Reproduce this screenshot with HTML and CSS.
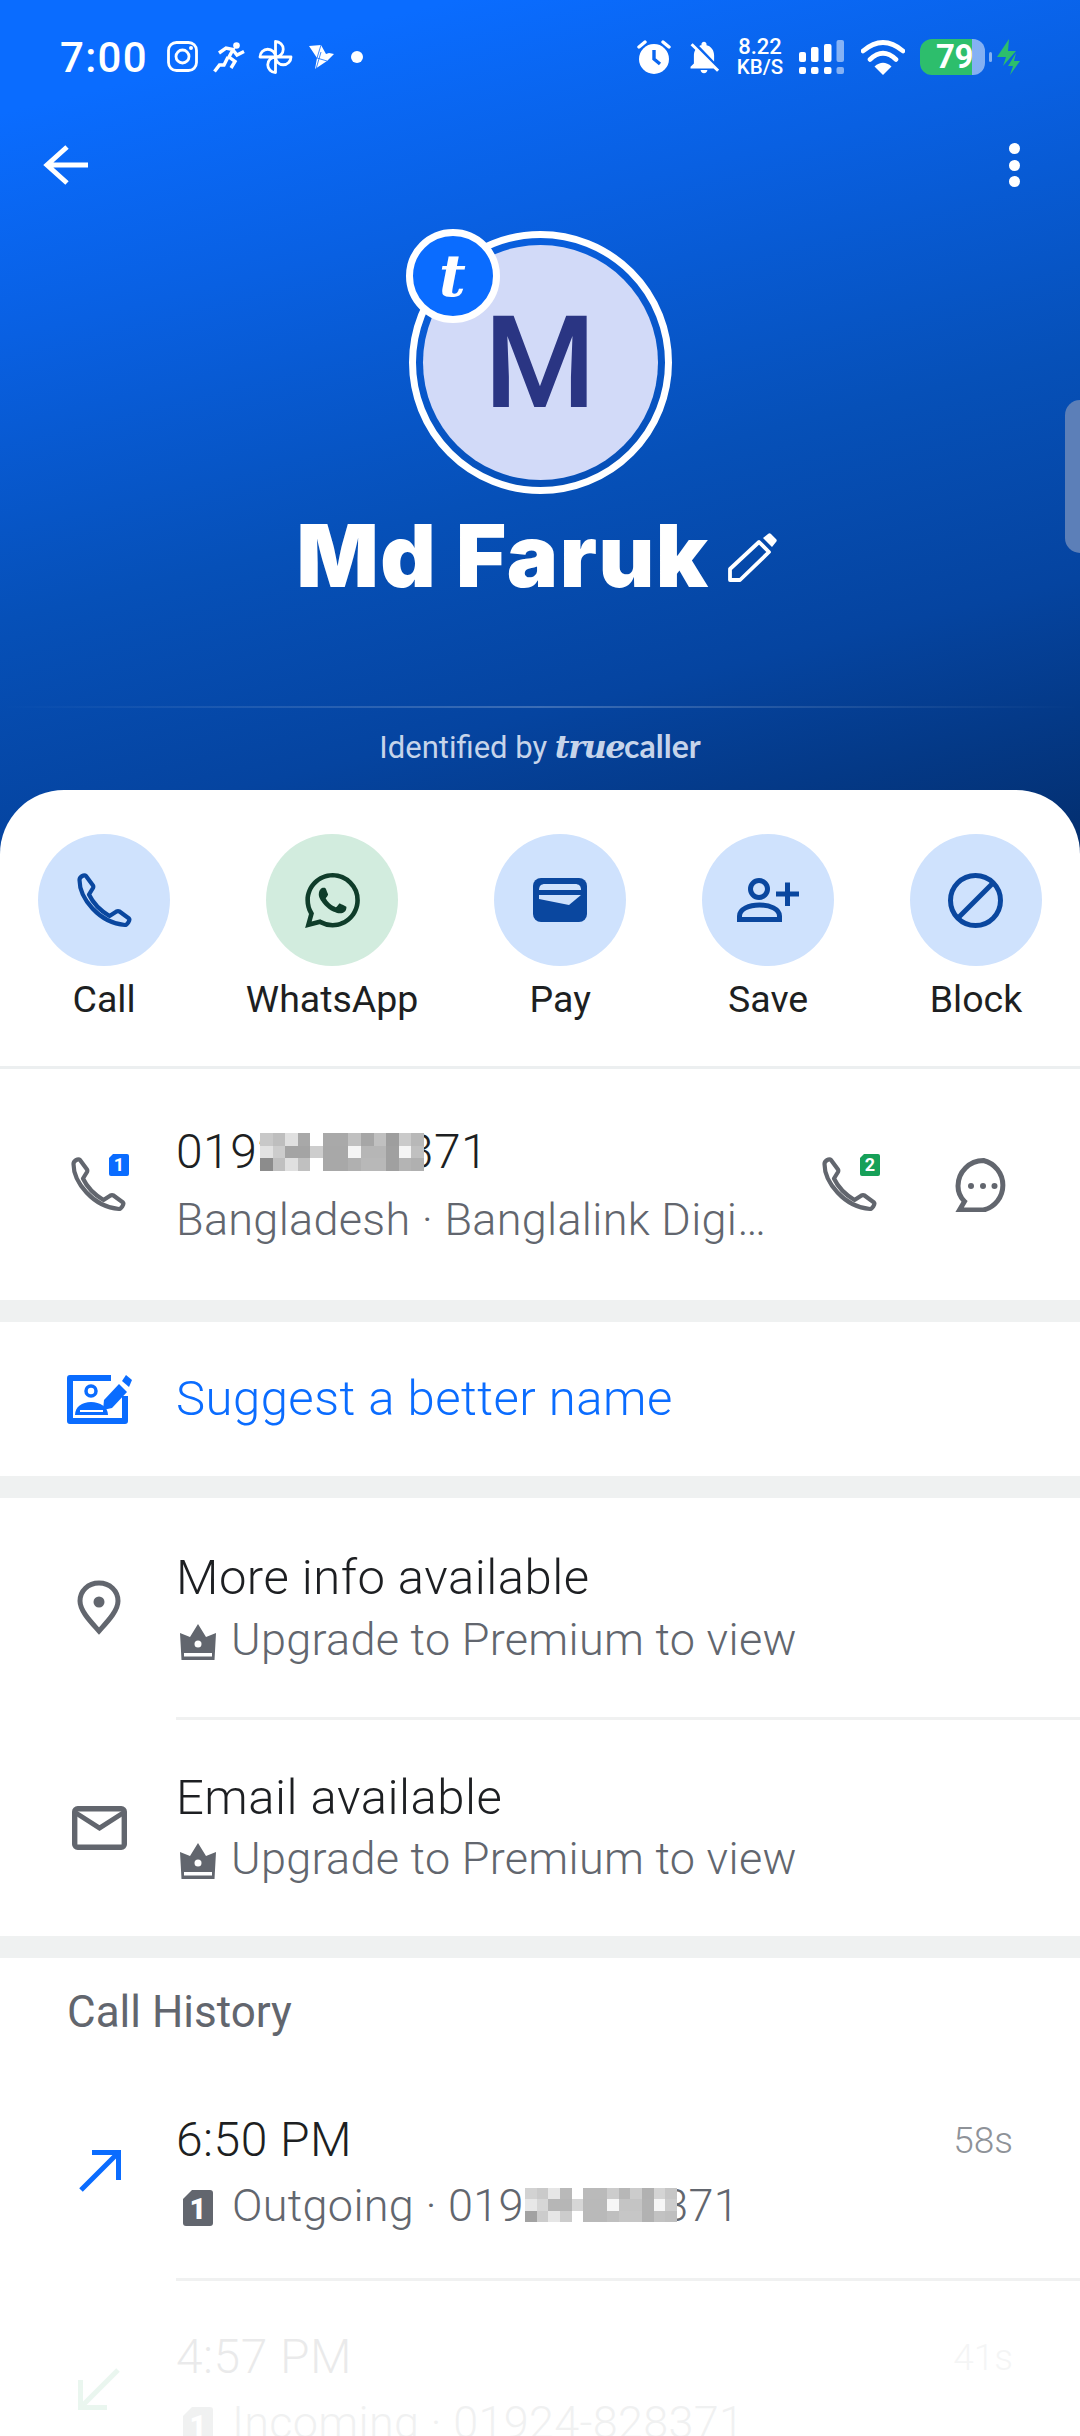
FILE: index.html
```html
<!DOCTYPE html>
<html lang="en">
<head>
<meta charset="utf-8">
<title>Md Faruk</title>
<link rel="stylesheet" href="styles.css">
</head>
<body>
<svg class="defs" aria-hidden="true">
  <symbol id="phone" viewBox="0 0 55 55"><path d="M2.500 7C2.500 4 7 1 9 3L16 12.500C16.500 13.500 16.500 14 16 15L12 21.500C16 30 24 38 32.500 43L39.500 38.500C40.500 38 41.500 38 42.500 38.500L52 45.500C53.500 47 50 52 48 52C22 50 2.500 25 2.500 7Z" fill="none" stroke="currentColor" stroke-width="4.200" stroke-linejoin="round"/></symbol>
  <symbol id="crown" viewBox="0 0 36 36"><path d="M18 0L26 13L36 9L34.500 36H1.500L0 9L10 13Z" fill="currentColor"/><circle cx="18" cy="20" r="3.500" fill="#fff"/><rect x="4" y="29" width="28" height="3.500" fill="#fff"/></symbol>
  <symbol id="mosaic" viewBox="0 0 13 3" preserveAspectRatio="none">
    <g shape-rendering="crispEdges">
      <rect x="0" y="0" width="1" height="1" fill="#c8c8c8"/><rect x="1" y="0" width="1" height="1" fill="#bebebe"/><rect x="2" y="0" width="1" height="1" fill="#e0e0e0"/><rect x="3" y="0" width="1" height="1" fill="#a8a8a8"/><rect x="4" y="0" width="1" height="1" fill="#fff"/><rect x="5" y="0" width="2" height="1" fill="#a9a9a9"/><rect x="7" y="0" width="1" height="1" fill="#c0c0c0"/><rect x="8" y="0" width="1" height="1" fill="#a6a6a6"/><rect x="9" y="0" width="1" height="1" fill="#c0c0c0"/><rect x="10" y="0" width="1" height="1" fill="#9e9e9e"/><rect x="11" y="0" width="1" height="1" fill="#cacaca"/><rect x="12" y="0" width="1" height="1" fill="#b8b8b8"/>
      <rect x="0" y="1" width="1" height="1" fill="#e2e2e2"/><rect x="1" y="1" width="1" height="1" fill="#cccccc"/><rect x="2" y="1" width="2" height="1" fill="#a4a4a4"/><rect x="4" y="1" width="1" height="1" fill="#cdcdcd"/><rect x="5" y="1" width="2" height="1" fill="#a8a8a8"/><rect x="7" y="1" width="1" height="1" fill="#f5f5f5"/><rect x="8" y="1" width="2" height="1" fill="#b6b6b6"/><rect x="10" y="1" width="1" height="1" fill="#a0a0a0"/><rect x="11" y="1" width="1" height="1" fill="#f5f5f5"/><rect x="12" y="1" width="1" height="1" fill="#c0c0c0"/>
      <rect x="0" y="2" width="1" height="1" fill="#8c8c8c"/><rect x="1" y="2" width="1" height="1" fill="#c0c0c0"/><rect x="2" y="2" width="1" height="1" fill="#e0e0e0"/><rect x="3" y="2" width="1" height="1" fill="#c0c0c0"/><rect x="4" y="2" width="1" height="1" fill="#fff"/><rect x="5" y="2" width="2" height="1" fill="#a8a8a8"/><rect x="7" y="2" width="1" height="1" fill="#b0b0b0"/><rect x="8" y="2" width="2" height="1" fill="#b8b8b8"/><rect x="10" y="2" width="1" height="1" fill="#a0a0a0"/><rect x="11" y="2" width="1" height="1" fill="#b4b4b4"/><rect x="12" y="2" width="1" height="1" fill="#b0b0b0"/>
    </g>
  </symbol>
</svg>

<div class="phone">
  <div class="hero">
    <div class="status">
      <span class="time">7:00</span>
      <svg class="ic-insta" viewBox="0 0 31 31"><rect x="1.500" y="1.500" width="28" height="28" rx="8" fill="none" stroke="#fff" stroke-width="2.800"/><circle cx="15.500" cy="15.500" r="6.500" fill="none" stroke="#fff" stroke-width="2.800"/><circle cx="24" cy="7" r="2" fill="#fff"/></svg>
      <svg class="ic-run" viewBox="0 0 32 31"><circle cx="23.500" cy="3.500" r="3.300" fill="#fff"/><path d="M6 11L13 6L20 7.500L16 15L22 19.500L18 26M20 8L24 13L31 9.500M15 15L11 23H6.500L1.500 29.500" fill="none" stroke="#fff" stroke-width="3.400"/></svg>
      <svg class="ic-wheel" viewBox="0 0 35 34"><g fill="none" stroke="#fff" stroke-width="2.800" stroke-linejoin="round"><path d="M17.500 17V1.500A7.700 7.700 0 0 1 17.500 17Z"/><path d="M17.500 17H33A7.700 7.700 0 0 1 17.500 17Z"/><path d="M17.500 17V32.500A7.700 7.700 0 0 1 17.500 17Z"/><path d="M17.500 17H2A7.700 7.700 0 0 1 17.500 17Z"/></g></svg>
      <svg class="ic-bird" viewBox="0 0 26 24"><path d="M0 1L12 0L17 9L20 8L25 9L18 16L6 24L8 13Z" fill="#fff"/><path d="M8 13L12 0M8 13L18 16M12 7L7 24" stroke="#0a6cff" stroke-width=".8"/></svg>
      <i class="ic-dot"></i>
      <span class="status-gap"></span>
      <svg class="ic-alarm" viewBox="0 0 34 34"><circle cx="17" cy="19" r="15" fill="#fff"/><path d="M17 10V19L23 24" fill="none" stroke="#0a66f0" stroke-width="3.400"/><path d="M2 7L8 2M32 7L26 2" stroke="#fff" stroke-width="3.400" stroke-linecap="round"/></svg>
      <svg class="ic-bell" viewBox="2.500 1.500 19 21.500" preserveAspectRatio="none"><path fill="#fff" d="M20 18.690L7.840 6.140 5.270 3.490 4 4.760l2.800 2.800v.01c-.52.99-.8 2.160-.8 3.420v5l-2 2v1h13.730l2 2L21 19.720l-1-1.030zM12 22c1.110 0 2-.89 2-2h-4c0 1.110.89 2 2 2zm6-7.320V11c0-3.080-1.640-5.640-4.500-6.320V4c0-.83-.67-1.500-1.500-1.500s-1.500.67-1.500 1.500v.68c-.15.03-.29.08-.42.12-.1.03-.2.07-.3.11h-.01c-.2.08-.4.170-.59.270-.01 0-.01.01-.02.01L18 14.680z"/></svg>
      <span class="speed"><span>8.22</span><span class="speed-unit">KB/S</span></span>
      <svg class="ic-signal" viewBox="0 0 46 35"><g fill="#fff"><rect x="0" y="12" width="7" height="10" rx="2"/><rect x="12" y="7" width="7.500" height="15" rx="2"/><rect x="25" y="4" width="7.500" height="18" rx="2"/><rect x="0" y="27" width="7" height="7" rx="2"/><rect x="12" y="27" width="7.500" height="7" rx="2"/><rect x="25" y="27" width="7.500" height="7" rx="2"/></g><g fill="#fff" opacity=".5"><rect x="37.500" y="0" width="7.500" height="22" rx="2"/><rect x="37.500" y="27" width="7.500" height="7" rx="2"/></g></svg>
      <svg class="ic-wifi" viewBox="0 0 44 36"><path d="M2 12Q22-5 42 12M9 20.500Q22 8 35 20.500" fill="none" stroke="#fff" stroke-width="4.600" stroke-linecap="round"/><path d="M22 36L13.500 27.500Q22 20 30.500 27.500Z" fill="#fff"/></svg>
      <span class="battery">79</span>
      <i class="battery-nub"></i>
      <svg class="ic-bolt" viewBox="0 0 23 36"><path d="M12 0L0 18H9L6 27L19 12H11Z M19 14L11 27H16L13 36L23 22H17Z" fill="#2dbe6c"/></svg>
    </div>
    <div class="toolbar">
      <svg class="ic-back" viewBox="0 0 46 42"><path d="M45 21H5M24 3L4 21L24 39" fill="none" stroke="#fff" stroke-width="5"/></svg>
      <span class="dots"><i></i><i></i><i></i></span>
    </div>
    <div class="avatar">
      <div class="avatar-disk">M</div>
      <div class="avatar-badge">t</div>
    </div>
    <div class="name-row">
      <span class="name">Md Faruk</span>
      <svg class="ic-pencil" viewBox="0 0 50 50"><path d="M3 47V36L32 9L42 19L13 47Z" fill="none" stroke="#fff" stroke-width="3.800" stroke-linejoin="round"/><path d="M36 5L41 1C42 0 43 0 44 1L49 6C50 7 50 8 49 9L45 14Z" fill="#fff"/></svg>
    </div>
    <div class="hero-rule"></div>
    <div class="identified">Identified by <span class="tc"><span class="tc-true">true</span><span class="tc-caller">caller</span></span></div>
  </div>

  <div class="sheet">
    <div class="actions">
      <div class="action">
        <div class="action-disc"><svg class="ai-phone"><use href="#phone"/></svg></div>
        <span class="action-label">Call</span>
      </div>
      <div class="action">
        <div class="action-disc disc-green"><svg class="ai-wa" viewBox="0 0 24 24"><path fill="currentColor" d="M17.472 14.382c-.297-.149-1.758-.867-2.03-.967-.273-.099-.471-.148-.67.15-.197.297-.767.966-.94 1.164-.173.199-.347.223-.644.075-.297-.15-1.255-.463-2.39-1.475-.883-.788-1.48-1.761-1.653-2.059-.173-.297-.018-.458.13-.606.134-.133.298-.347.446-.52.149-.174.198-.298.298-.497.099-.198.05-.371-.025-.52-.075-.149-.669-1.612-.916-2.207-.242-.579-.487-.5-.669-.51-.173-.008-.371-.01-.57-.01-.198 0-.52.074-.792.372-.272.297-1.04 1.016-1.04 2.479 0 1.462 1.065 2.875 1.213 3.074.149.198 2.096 3.2 5.077 4.487.709.306 1.262.489 1.694.625.712.227 1.36.195 1.871.118.571-.085 1.758-.719 2.006-1.413.248-.694.248-1.289.173-1.413-.074-.124-.272-.198-.57-.347m-5.421 7.403h-.004a9.87 9.87 0 01-5.031-1.378l-.361-.214-3.741.982.998-3.648-.235-.374a9.86 9.86 0 01-1.51-5.26c.001-5.45 4.436-9.884 9.888-9.884 2.64 0 5.122 1.03 6.988 2.898a9.825 9.825 0 012.893 6.994c-.003 5.45-4.437 9.884-9.885 9.884m8.413-18.297A11.815 11.815 0 0012.05 0C5.495 0 .16 5.335.157 11.892c0 2.096.547 4.142 1.588 5.945L.057 24l6.305-1.654a11.882 11.882 0 005.683 1.448h.005c6.554 0 11.89-5.335 11.893-11.893a11.821 11.821 0 00-3.48-8.413z"/></svg></div>
        <span class="action-label">WhatsApp</span>
      </div>
      <div class="action">
        <div class="action-disc"><svg class="ai-pay" viewBox="0 0 54 44"><rect width="54" height="44" rx="8" fill="currentColor"/><path d="M6 12C6 8 8 6 12 6H42C46 6 48 8 48 12Z" fill="#cfe2fd"/><path d="M6 17H48L36 27L6 21Z" fill="#cfe2fd"/></svg></div>
        <span class="action-label">Pay</span>
      </div>
      <div class="action">
        <div class="action-disc"><svg class="ai-save" viewBox="0 0 62 44"><g fill="none" stroke="currentColor" stroke-width="5"><circle cx="22" cy="11" r="8.500"/><path d="M2.500 41.500V38C2.500 31 12 27 22.500 27S42.500 31 42.500 38V41.500Z"/><path d="M39 16H62M50.500 4.500V28"/></g></svg></div>
        <span class="action-label">Save</span>
      </div>
      <div class="action">
        <div class="action-disc"><svg class="ai-block" viewBox="0 0 55 55"><circle cx="27.500" cy="27.500" r="25" fill="none" stroke="currentColor" stroke-width="5"/><path d="M45 10L10 45" stroke="currentColor" stroke-width="5"/></svg></div>
        <span class="action-label">Block</span>
      </div>
    </div>

    <div class="row row-number">
      <div class="row-icon">
        <div class="phone-sim">
          <svg class="i-phone"><use href="#phone"/></svg>
          <svg class="sim-tag" viewBox="0 0 20 22"><path d="M4 0H18A2 2 0 0 1 20 2V20A2 2 0 0 1 18 22H2A2 2 0 0 1 0 20V4Z" fill="#0a6cff"/><text x="10" y="17" class="sim-num">1</text></svg>
        </div>
      </div>
      <div class="row-text">
        <div class="primary digits masked">01924-828371<svg class="mosaic mosaic-a"><use href="#mosaic"/></svg></div>
        <div class="secondary gap8">Bangladesh · Banglalink Digi…</div>
      </div>
      <div class="row-tools">
        <div class="phone-sim">
          <svg class="i-phone"><use href="#phone"/></svg>
          <svg class="sim-tag" viewBox="0 0 20 22"><path d="M4 0H18A2 2 0 0 1 20 2V20A2 2 0 0 1 18 22H2A2 2 0 0 1 0 20V4Z" fill="#16a058"/><text x="10" y="17" class="sim-num">2</text></svg>
        </div>
        <svg class="i-msg" viewBox="0 0 56 54"><path d="M28.500 2.500A25.500 25.500 0 0 1 28.500 52H4.500L9.500 43.500C5 39 3 34 3 28A25.500 25.500 0 0 1 28.500 2.500Z" fill="none" stroke="#62666e" stroke-width="5"/><circle cx="16" cy="28" r="3" fill="#62666e"/><circle cx="28" cy="28" r="3" fill="#62666e"/><circle cx="39.500" cy="28" r="3" fill="#62666e"/></svg>
      </div>
    </div>
    <div class="band"></div>

    <div class="row row-suggest">
      <div class="row-icon">
        <svg class="i-suggest" viewBox="0 0 65 50"><path d="M44 4H3V47H58V22" fill="none" stroke="#0a6cff" stroke-width="6" stroke-linejoin="round"/><circle cx="24" cy="17" r="5" fill="none" stroke="#0a6cff" stroke-width="3.500"/><path d="M8 41C8 33 15 28 24 28S41 33 41 41Z" fill="#0a6cff"/><path d="M13 37H36" stroke="#fff" stroke-width="2"/><path d="M36 36L37 26L52 10L60 18L45 34Z" fill="#0a6cff"/><path d="M55 7L59 1L65 6L62 13Z" fill="#0a6cff"/></svg>
      </div>
      <div class="row-text"><div class="primary link">Suggest a better name</div></div>
    </div>
    <div class="band"></div>

    <div class="row row-info">
      <div class="row-icon">
        <svg class="i-pin" viewBox="0 0 44 55"><path d="M22 3C11 3 3 11 3 21C3 31 14 42 22 51C30 42 41 31 41 21C41 11 33 3 22 3Z" fill="none" stroke="#62666e" stroke-width="5"/><circle cx="22" cy="22" r="5.500" fill="#62666e"/></svg>
      </div>
      <div class="row-text">
        <div class="primary">More info available</div>
        <div class="secondary with-icon"><svg class="i-crown"><use href="#crown"/></svg>Upgrade to Premium to view</div>
      </div>
    </div>
    <div class="rule"></div>
    <div class="row row-email">
      <div class="row-icon">
        <svg class="i-mail" viewBox="0 0 55 44"><rect x="2.700" y="2.700" width="49.600" height="38.600" rx="3" fill="none" stroke="#62666e" stroke-width="5.400"/><path d="M4 7L27.500 22L51 7" fill="none" stroke="#62666e" stroke-width="5"/></svg>
      </div>
      <div class="row-text">
        <div class="primary">Email available</div>
        <div class="secondary with-icon"><svg class="i-crown"><use href="#crown"/></svg>Upgrade to Premium to view</div>
      </div>
    </div>
    <div class="band"></div>

    <div class="history-title">Call History</div>
    <div class="row row-call">
      <div class="row-icon">
        <svg class="i-arrow" viewBox="0 0 43 43"><path d="M14 2.500H40.500V30M40 3L3 40" fill="none" stroke="#0a6cff" stroke-width="5"/></svg>
      </div>
      <div class="row-text">
        <div class="primary digits">6:50 PM</div>
        <div class="secondary gap5 with-icon masked"><svg class="i-sim" viewBox="0 0 30 36"><path d="M9 0H27A3 3 0 0 1 30 3V33A3 3 0 0 1 27 36H3A3 3 0 0 1 0 33V9Z" fill="#62666e"/><text x="15" y="29" class="sim-num-lg">1</text></svg>Outgoing · 01924-828371<svg class="mosaic mosaic-b"><use href="#mosaic"/></svg></div>
      </div>
      <span class="duration">58s</span>
    </div>
    <div class="rule"></div>
    <div class="row row-call row-faded">
      <div class="row-icon">
        <svg class="i-arrow" viewBox="0 0 43 43"><path d="M29 40.500H2.500V13M3 40L40 3" fill="none" stroke="#16a058" stroke-width="5"/></svg>
      </div>
      <div class="row-text">
        <div class="primary digits">4:57 PM</div>
        <div class="secondary gap5 with-icon"><svg class="i-sim" viewBox="0 0 30 36"><path d="M9 0H27A3 3 0 0 1 30 3V33A3 3 0 0 1 27 36H3A3 3 0 0 1 0 33V9Z" fill="#62666e"/><text x="15" y="29" class="sim-num-lg">1</text></svg>Incoming · 01924-828371</div>
      </div>
      <span class="duration">41s</span>
    </div>
  </div>

  <div class="edge-handle"></div>
</div>
</body>
</html>
```

FILE: styles.css
```css
* { box-sizing: border-box; }
html, body { margin: 0; padding: 0; background: #fff; }
body { font-family: Roboto, "Noto Sans", sans-serif; }
i { display: block; }
svg { display: block; flex: none; }
.defs { position: absolute; width: 0; height: 0; overflow: hidden; }

.phone { position: relative; width: 1080px; height: 2436px; overflow: hidden; }

/* Hero */
.hero {
  height: 860px;
  background: linear-gradient(166deg, #0a6cff 0%, #0a6cff 10%, #0960e2 30%, #0650b8 55%, #0544a0 75%, #032f70 98%);
  color: #fff;
}
.status { display: flex; align-items: center; height: 114px; padding-left: 60px; padding-right: 60px; }
.time { font-size: 42px; font-weight: 500; letter-spacing: 1.300px; width: 107px; }
.ic-insta { width: 31px; height: 31px; margin-top: -1px; }
.ic-run { width: 32px; height: 31px; margin-left: 15px; }
.ic-wheel { width: 35px; height: 34px; margin-left: 13px; }
.ic-bird { width: 26px; height: 24px; margin-left: 16px; }
.ic-dot { width: 12px; height: 12px; border-radius: 50%; background: #fff; margin-left: 16px; }
.status-gap { flex: 1; }
.ic-alarm { width: 34px; height: 34px; }
.ic-bell { width: 32px; height: 35px; margin-left: 17px; }
.speed { display: flex; flex-direction: column; align-items: center; width: 48px; margin-left: 16px; font-size: 22px; font-weight: 500; line-height: 20px; }
.speed-unit { font-size: 20.500px; }
.ic-signal { width: 46px; height: 35px; margin-left: 15px; }
.ic-wifi { width: 44px; height: 36px; margin-left: 16px; }
.battery {
  width: 65px; height: 36px; margin-left: 15px; padding-left: 16px; border-radius: 12px;
  background: linear-gradient(90deg, #2dbe6c 80%, rgba(255, 255, 255, .5) 80%);
  font-size: 33px; font-weight: 700; line-height: 36px; letter-spacing: -.5px;
}
.battery-nub { width: 3px; height: 10px; margin-left: 4px; border-radius: 2px; background: rgba(255, 255, 255, .5); }
.ic-bolt { width: 23px; height: 36px; margin-left: 5px; }

.toolbar { display: flex; justify-content: space-between; align-items: center; height: 102px; padding: 0 60px 0 43px; }
.ic-back { width: 46px; height: 42px; }
.dots { display: flex; flex-direction: column; gap: 5.500px; }
.dots i { width: 11px; height: 11px; border-radius: 50%; background: #fff; }

.avatar { position: relative; width: 263px; height: 263px; margin: 15px auto 0; padding: 7px; border: 7px solid #fff; border-radius: 50%; }
.avatar-disk {
  width: 100%; height: 100%; border-radius: 50%; background: #d2daf8; color: #2a3583;
  display: flex; align-items: center; justify-content: center;
  font-size: 128px; font-weight: 500; line-height: 1;
}
.avatar-badge {
  position: absolute; left: -10px; top: -9px; width: 94px; height: 94px;
  border: 7px solid #fff; border-radius: 50%; background: #0a6cff; color: #fff;
  display: flex; align-items: center; justify-content: center;
  font-family: "DejaVu Serif", serif; font-style: italic; font-weight: 700; font-size: 58px; line-height: 1;
}

.name-row { display: flex; align-items: center; justify-content: center; gap: 18px; height: 100px; margin-top: 12px; padding-right: 6px; }
.name { font-family: Inter, "Open Sans", sans-serif; font-weight: 900; font-size: 86px; line-height: 100px; letter-spacing: 1.500px; }
.ic-pencil { width: 50px; height: 50px; margin-top: 4px; }

.hero-rule { height: 2px; margin-top: 100px; background: linear-gradient(90deg, rgba(255,255,255,0) 0%, rgba(255,255,255,.22) 50%, rgba(255,255,255,0) 100%); }
.identified { margin-top: 17px; text-align: center; font-size: 31px; line-height: 42px; color: #c6d4ea; }
.tc { font-weight: 700; font-size: 32px; }
.tc-true { font-family: "DejaVu Serif", serif; font-style: italic; font-size: 32px; letter-spacing: -1.500px; }
.tc-caller { font-family: Lato, sans-serif; font-weight: 700; }

/* Sheet */
.sheet { position: relative; margin-top: -70px; background: #fff; border-radius: 64px 64px 0 0; }
.actions { display: flex; justify-content: space-between; align-items: flex-start; height: 279px; padding: 44px 38px 0; border-bottom: 3px solid #eceff0; }
.action { display: flex; flex-direction: column; align-items: center; }
.action-disc { width: 132px; height: 132px; border-radius: 50%; background: #cfe2fd; color: #0a479f; display: flex; align-items: center; justify-content: center; }
.disc-green { background: #d2ecde; color: #0f3d2a; }
.action-label { margin-top: 9px; font-size: 37.500px; line-height: 48px; color: #1d1f22; white-space: nowrap; }
.ai-phone { width: 55px; height: 55px; }
.ai-wa { width: 55px; height: 55px; }
.ai-pay { width: 54px; height: 44px; }
.ai-save { width: 62px; height: 44px; }
.ai-block { width: 55px; height: 55px; }

.row { display: flex; align-items: center; padding-left: 66px; }
.row-icon { width: 66px; margin-right: 44px; display: flex; justify-content: center; flex: none; }
.row-text { flex: 1; min-width: 0; }
.primary { font-size: 49px; font-weight: 360; letter-spacing: .5px; line-height: 60px; color: #1d1f22; white-space: nowrap; }
.digits { font-size: 48px; letter-spacing: .45px; }
.secondary { font-size: 45px; font-weight: 360; letter-spacing: .3px; line-height: 60px; color: #62666e; white-space: nowrap; }
.gap5 { margin-top: 6px; }
.gap8 { margin-top: 8px; }
.link { color: #0a6cff; }
.with-icon { display: flex; align-items: center; }

.row-number { height: 231px; color: #62666e; }
.row-number .row-text { flex: none; width: 596px; padding-top: 3px; }
.row-tools { display: flex; align-items: center; gap: 76px; margin-left: 50px; }
.row-suggest { height: 154px; }
.row-info { height: 219px; }
.row-info .secondary { margin-top: 2px; }
.row-info .row-text { padding-top: 2px; }
.row-email { height: 216px; }
.row-email .secondary { margin-top: 1px; }
.row-call { height: 214px; }
.row-call .row-text { padding-top: 3px; }
.row-faded { opacity: .085; }

.phone-sim { position: relative; width: 57px; height: 55px; color: #62666e; }
.i-phone { width: 55px; height: 55px; }
.sim-tag { position: absolute; right: -1px; top: -3px; width: 20px; height: 22px; }
.sim-num { fill: #fff; font-family: Roboto, sans-serif; font-weight: 700; font-size: 18px; text-anchor: middle; }
.sim-num-lg { fill: #fff; font-family: Roboto, sans-serif; font-weight: 900; font-size: 29px; text-anchor: middle; }
.i-msg { width: 56px; height: 54px; }
.i-suggest { width: 65px; height: 50px; }
.i-pin { width: 44px; height: 55px; }
.i-mail { width: 55px; height: 44px; }
.i-crown { width: 36px; height: 36px; margin: 4px 15px 0 4px; color: #62666e; }
.i-arrow { width: 43px; height: 43px; }
.i-sim { width: 30px; height: 36px; margin: 4px 19px 0 7px; }

.masked { position: relative; }
.mosaic { position: absolute; background: #fff; }
.mosaic-a { left: 84px; top: 11px; width: 164px; height: 38px; }
.mosaic-b { left: 349px; top: 12px; width: 152px; height: 34px; }
.mosaic-b use { opacity: .8; }

.band { height: 22px; background: #eff1f1; }
.rule { height: 3px; margin-left: 176px; background: #f0f1f1; }
.history-title { height: 106px; padding: 30px 0 0 67px; font-size: 44px; font-weight: 450; line-height: 48px; color: #62666e; }
.duration { flex: none; width: 67px; margin-right: 67px; margin-bottom: 61px; text-align: right; font-size: 37px; font-weight: 360; line-height: 48px; color: #8e9298; }

.edge-handle { position: absolute; right: 0; top: 400px; width: 15px; height: 153px; border-radius: 16px 0 0 16px; background: #5c7fb8; }
```
